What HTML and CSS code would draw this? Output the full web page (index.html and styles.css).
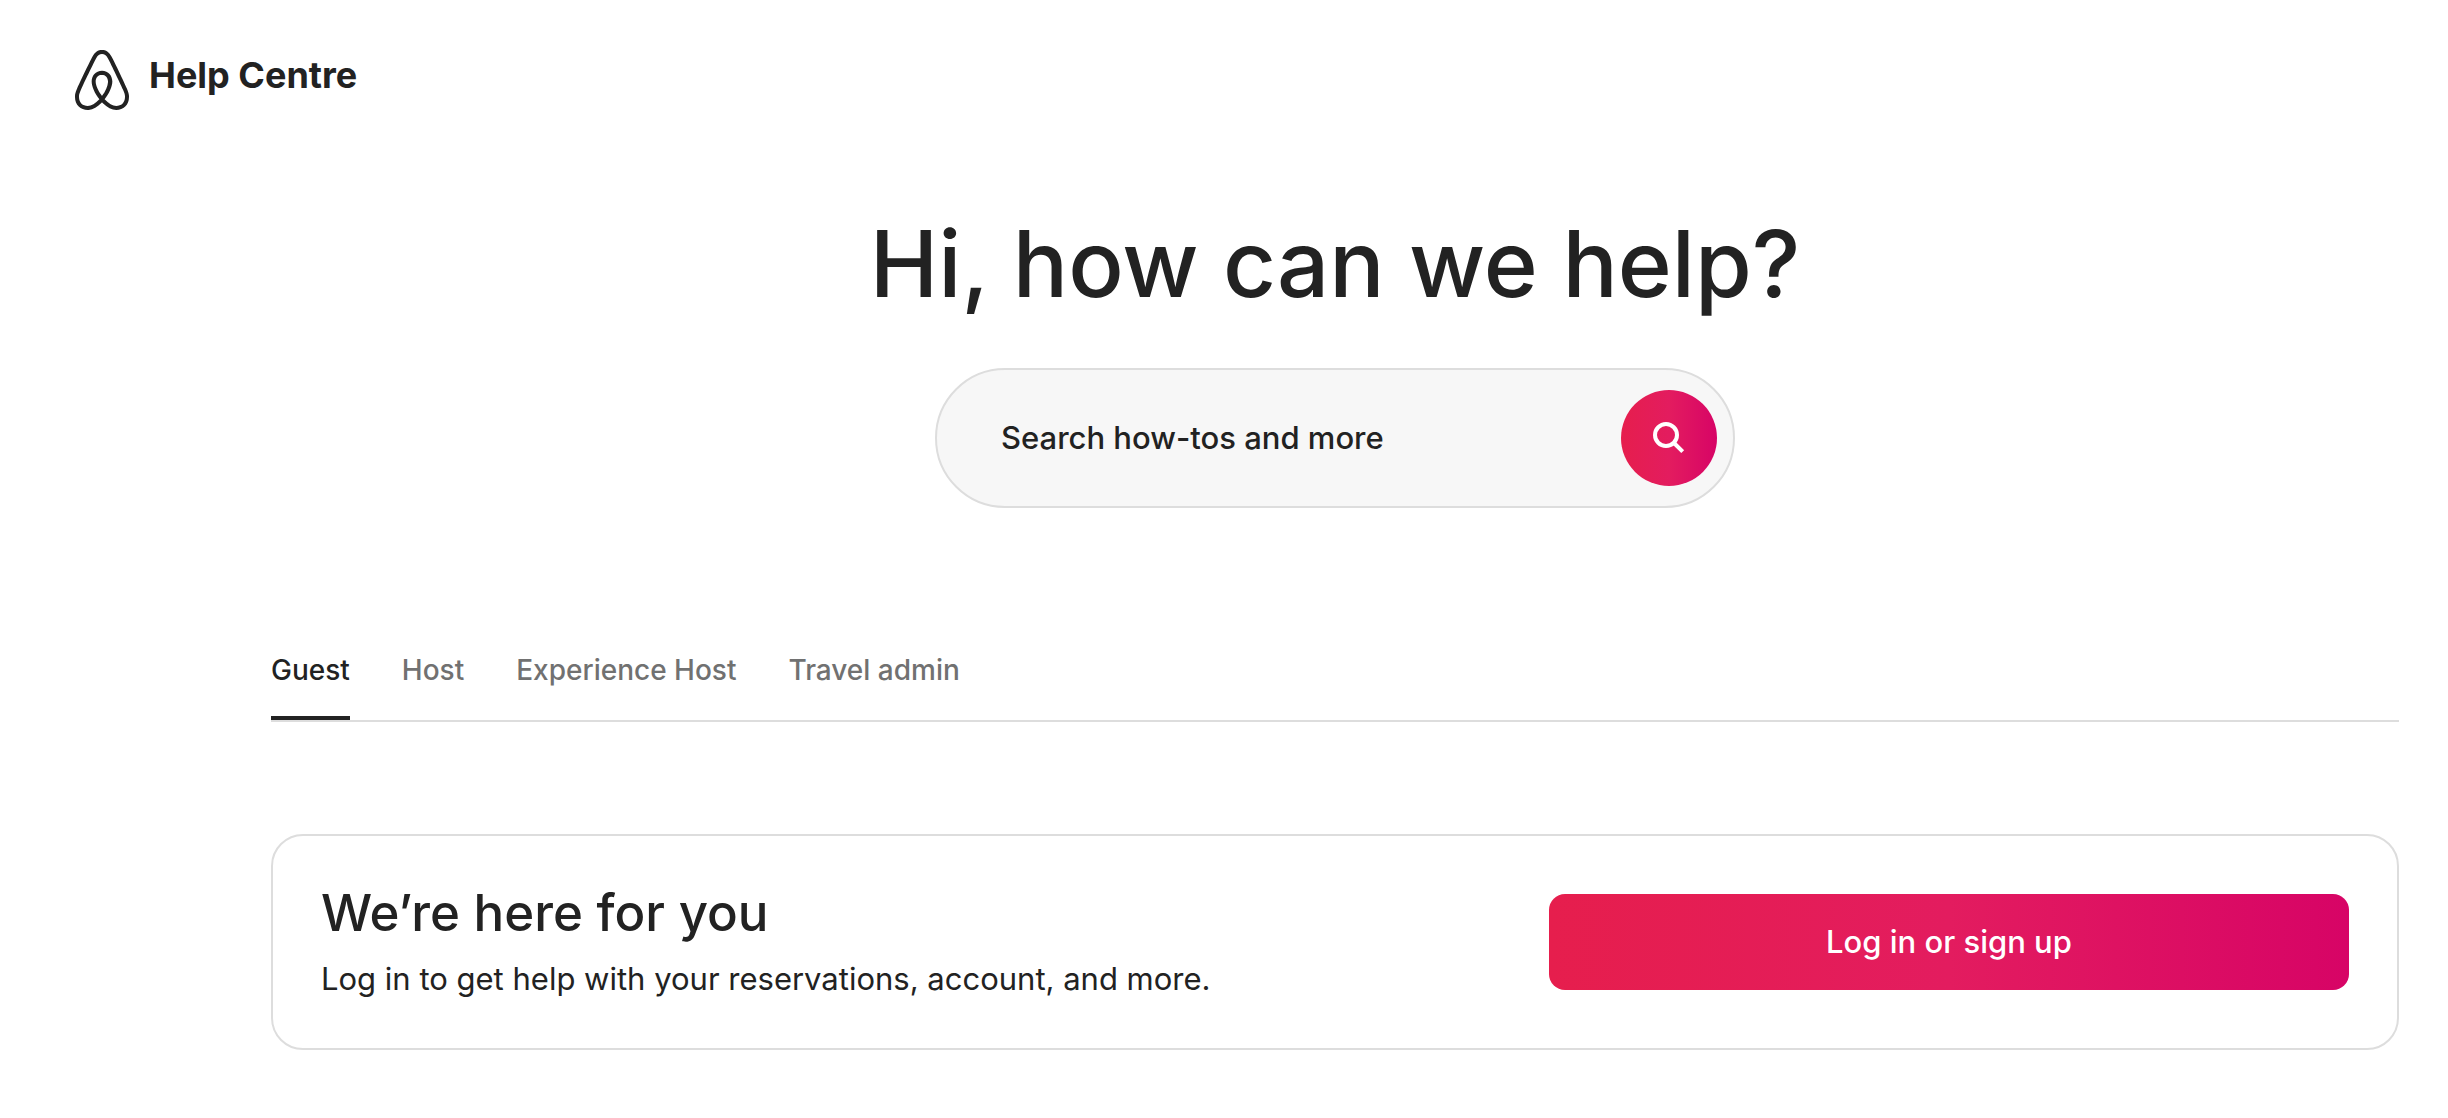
FILE: index.html
```html
<!DOCTYPE html>
<html lang="en">
<head>
  <meta charset="utf-8">
  <meta name="viewport" content="width=device-width, initial-scale=1">
  <title>Help Centre</title>
  <link rel="stylesheet" href="styles.css">
</head>
<body>
  <header class="site-header">
    <a class="brand" href="#">
      <svg class="brand-logo" viewBox="2.5 1 27 30" aria-hidden="true"><path d="M16 1c2.008 0 3.463.963 4.751 3.269l.533 1.025c1.954 3.83 6.114 12.54 7.1 14.836l.145.353c.667 1.591.91 2.472.96 3.396l.01.415.001.228c0 4.062-2.877 6.478-6.357 6.478-2.224 0-4.556-1.258-6.709-3.386l-.257-.26-.172-.179h-.011l-.176.185c-2.044 2.1-4.267 3.42-6.414 3.615l-.28.019-.267.006C5.377 31 2.5 28.584 2.5 24.522l.005-.469c.026-.928.23-1.768.83-3.244l.216-.524c.966-2.298 6.083-12.989 7.707-16.034C12.537 1.963 13.992 1 16 1zm0 2c-1.239 0-2.053.539-2.987 2.21l-.523 1.008c-1.926 3.776-6.06 12.43-7.031 14.692l-.345.836c-.427 1.071-.573 1.655-.605 2.24l-.009.33v.206C4.5 27.395 6.411 29 8.857 29c1.773 0 3.87-1.236 5.831-3.354-2.295-2.938-3.855-6.45-3.855-8.91 0-2.913 1.933-5.386 5.178-5.42 3.223.034 5.156 2.507 5.156 5.42 0 2.456-1.555 5.96-3.855 8.907C19.277 27.766 21.37 29 23.142 29c2.447 0 4.358-1.605 4.358-4.478l-.004-.411c-.019-.672-.17-1.296-.714-2.62l-.248-.6c-1.065-2.478-5.993-12.768-7.538-15.664C18.053 3.539 17.24 3 16 3zm.01 10.316c-2.01.021-3.177 1.514-3.177 3.42 0 1.797 1.18 4.58 2.955 6.944l.21.271.022-.03c1.728-2.305 2.896-5.02 2.976-6.855l.004-.33c0-1.906-1.167-3.399-3.168-3.42z"/></svg>
      <span class="brand-name">Help Centre</span>
    </a>
  </header>

  <main class="content">
    <h1 class="page-title">Hi, how can we help?</h1>

    <form class="search" role="search">
      <input class="search-input" type="search" placeholder="Search how-tos and more" aria-label="Search how-tos and more">
      <button class="search-button" type="submit" aria-label="Search">
        <svg class="search-icon" viewBox="0 0 32 32" aria-hidden="true"><circle cx="13" cy="13" r="11"/><path d="M20.5 20.5l9.2 9.2"/></svg>
      </button>
    </form>

    <div class="tabs" role="tablist">
      <button class="tab tab-selected" type="button" role="tab" aria-selected="true">Guest</button>
      <button class="tab" type="button" role="tab" aria-selected="false">Host</button>
      <button class="tab" type="button" role="tab" aria-selected="false">Experience Host</button>
      <button class="tab" type="button" role="tab" aria-selected="false">Travel admin</button>
    </div>

    <section class="card">
      <div class="card-text">
        <h2 class="card-title">We’re here for you</h2>
        <p class="card-note">Log in to get help with your reservations, account, and more.</p>
      </div>
      <button class="login-button" type="button">Log in or sign up</button>
    </section>
  </main>
</body>
</html>
```
FILE: styles.css
```css
:root {
  --ink: #222222;
  --muted: #717171;
  --line: #dddddd;
  --brand-gradient: linear-gradient(to right, #e61e4d 0%, #e31c5f 50%, #d70466 100%);
}

* {
  box-sizing: border-box;
}

body {
  margin: 0;
  background: #ffffff;
  color: var(--ink);
  font-family: Inter, "Liberation Sans", sans-serif;
}

button,
input {
  font-family: inherit;
}

button {
  margin: 0;
  padding: 0;
  border: 0;
  cursor: pointer;
}

/* Header */

.site-header {
  display: flex;
  padding: 50px 75px 0;
}

.brand {
  display: flex;
  align-items: flex-start;
  gap: 20px;
  color: inherit;
  text-decoration: none;
}

.brand-logo {
  width: 54px;
  height: 60px;
  fill: currentColor;
}

.brand-name {
  font-size: 36px;
  font-weight: 700;
  line-height: 50px;
}

/* Main column */

.content {
  padding: 102px 49px 68px 271px;
}

.page-title {
  margin: 0;
  font-size: 92px;
  font-weight: 550;
  line-height: 104px;
  text-align: center;
}

/* Search */

.search {
  display: flex;
  align-items: center;
  max-width: 800px;
  height: 140px;
  margin: 52px auto 0;
  padding: 0 16px 0 64px;
  border: 2px solid var(--line);
  border-radius: 70px;
  background: #f7f7f7;
}

.search-input {
  flex: 1;
  min-width: 0;
  padding: 0;
  border: 0;
  outline: 0;
  background: transparent;
  color: var(--ink);
  font-size: 31px;
  font-weight: 550;
  line-height: 44px;
}

.search-input::placeholder {
  color: var(--ink);
  opacity: 1;
}

.search-button {
  display: flex;
  flex: none;
  align-items: center;
  justify-content: center;
  width: 96px;
  height: 96px;
  border-radius: 50%;
  background: var(--brand-gradient);
}

.search-icon {
  width: 32px;
  height: 32px;
  fill: none;
  stroke: #ffffff;
  stroke-width: 4;
}

/* Tabs */

.tabs {
  display: flex;
  gap: 52px;
  margin-top: 144px;
  border-bottom: 2px solid var(--line);
}

.tab {
  padding-bottom: 28px;
  border-bottom: 4px solid transparent;
  background: none;
  color: var(--muted);
  font-size: 28px;
  font-weight: 500;
  line-height: 36px;
}

.tab-selected {
  border-bottom-color: var(--ink);
  color: var(--ink);
}

/* Login card */

.card {
  display: flex;
  align-items: center;
  justify-content: space-between;
  gap: 48px;
  min-height: 216px;
  margin-top: 112px;
  padding: 32px 48px;
  border: 2px solid var(--line);
  border-radius: 32px;
}

.card-title {
  margin: 0;
  font-size: 51px;
  font-weight: 550;
  line-height: 60px;
}

.card-note {
  margin: 14px 0 0;
  font-size: 31px;
  line-height: 44px;
}

.login-button {
  flex: 0 1 800px;
  height: 96px;
  border-radius: 16px;
  background: var(--brand-gradient);
  color: #ffffff;
  font-size: 31px;
  font-weight: 500;
  line-height: 40px;
}
```
